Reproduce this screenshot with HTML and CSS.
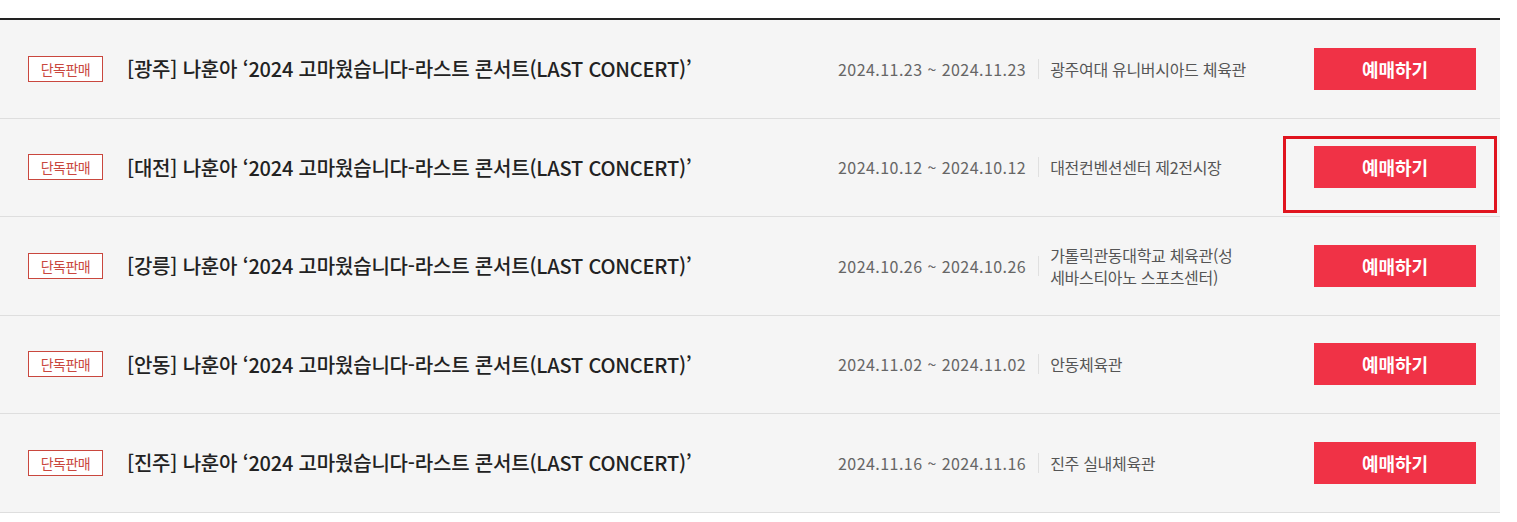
FILE: index.html
```html
<!DOCTYPE html>
<html lang="ko">
<head>
<meta charset="utf-8">
<title>나훈아 콘서트 예매</title>
<link rel="stylesheet" href="styles.css">
</head>
<body>
<div class="list">
  <div class="row">
    <span class="badge">단독판매</span>
    <div class="title">[광주] 나훈아 ‘2024 고마웠습니다-라스트 콘서트(LAST CONCERT)’</div>
    <div class="date">2024.11.23 ~ 2024.11.23</div>
    <span class="sep"></span>
    <div class="venue">광주여대 유니버시아드 체육관</div>
    <a class="btn">예매하기</a>
  </div>
  <div class="row">
    <span class="badge">단독판매</span>
    <div class="title">[대전] 나훈아 ‘2024 고마웠습니다-라스트 콘서트(LAST CONCERT)’</div>
    <div class="date">2024.10.12 ~ 2024.10.12</div>
    <span class="sep"></span>
    <div class="venue">대전컨벤션센터 제2전시장</div>
    <div class="btn-wrap">
      <a class="btn">예매하기</a>
      <span class="highlight"></span>
    </div>
  </div>
  <div class="row">
    <span class="badge">단독판매</span>
    <div class="title">[강릉] 나훈아 ‘2024 고마웠습니다-라스트 콘서트(LAST CONCERT)’</div>
    <div class="date">2024.10.26 ~ 2024.10.26</div>
    <span class="sep"></span>
    <div class="venue">가톨릭관동대학교 체육관(성 세바스티아노 스포츠센터)</div>
    <a class="btn">예매하기</a>
  </div>
  <div class="row">
    <span class="badge">단독판매</span>
    <div class="title">[안동] 나훈아 ‘2024 고마웠습니다-라스트 콘서트(LAST CONCERT)’</div>
    <div class="date">2024.11.02 ~ 2024.11.02</div>
    <span class="sep"></span>
    <div class="venue">안동체육관</div>
    <a class="btn">예매하기</a>
  </div>
  <div class="row">
    <span class="badge">단독판매</span>
    <div class="title">[진주] 나훈아 ‘2024 고마웠습니다-라스트 콘서트(LAST CONCERT)’</div>
    <div class="date">2024.11.16 ~ 2024.11.16</div>
    <span class="sep"></span>
    <div class="venue">진주 실내체육관</div>
    <a class="btn">예매하기</a>
  </div>
</div>
</body>
</html>
```

FILE: styles.css
```css
html, body {
  margin: 0;
  padding: 0;
  background: #fff;
}
body {
  font-family: "Noto Sans CJK KR", "Noto Sans", sans-serif;
  color: #333;
}
.list {
  margin-top: 18px;
  width: 1500px;
  border-top: 2px solid #222;
}
.row {
  display: flex;
  align-items: center;
  height: 97.5px;
  box-sizing: content-box;
  padding: 0 24px 0 28px;
  background: #f5f5f5;
  border-bottom: 1px solid #dedede;
}
.badge {
  flex: none;
  width: 75px;
  height: 26px;
  box-sizing: border-box;
  border: 1px solid #c9473e;
  background: #fff;
  color: #c9473e;
  font-size: 14px;
  line-height: 24px;
  text-align: center;
  margin-right: 24px;
  letter-spacing: -0.5px;
}
.title {
  flex: none;
  width: 711px;
  font-size: 20px;
  font-weight: 500;
  color: #222;
  letter-spacing: -0.2px;
  white-space: nowrap;
}
.date {
  flex: none;
  font-size: 16px;
  color: #666;
  letter-spacing: 0.45px;
}
.sep {
  flex: none;
  width: 1px;
  height: 20px;
  background: #e0e0e0;
  margin: 0 11px 0 12px;
}
.venue {
  flex: none;
  width: 200px;
  font-size: 16px;
  color: #555;
  line-height: 22px;
  letter-spacing: -0.3px;
  word-break: keep-all;
}
.btn {
  flex: none;
  margin-left: auto;
  width: 162px;
  height: 42px;
  background: #f03246;
  color: #fff;
  font-size: 18px;
  font-weight: 700;
  line-height: 42px;
  text-align: center;
  cursor: pointer;
}
.btn-wrap {
  position: relative;
  margin-left: auto;
  display: flex;
}
.highlight {
  position: absolute;
  left: -31px;
  top: -10px;
  width: 214px;
  height: 77px;
  box-sizing: border-box;
  border: 3px solid #e0141e;
}
```
